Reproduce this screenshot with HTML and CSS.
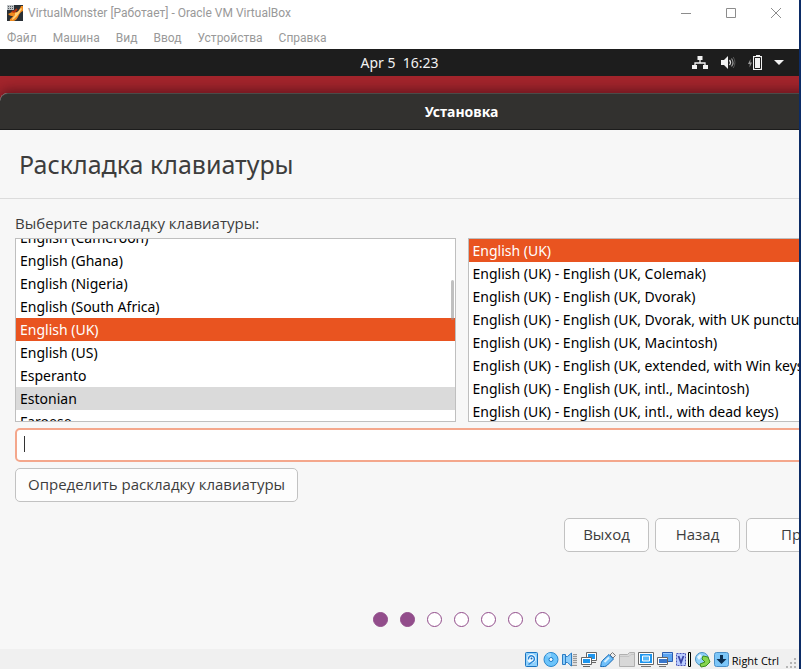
FILE: index.html
```html
<!DOCTYPE html>
<html lang="ru">
<head>
<meta charset="utf-8">
<title>VirtualMonster [Работает] - Oracle VM VirtualBox</title>
<link rel="stylesheet" href="styles.css">
</head>
<body>
<div class="vm">
  <header class="titlebar">
    <svg class="app-icon" viewBox="0 0 16 16" aria-hidden="true">
      <rect width="16" height="16" fill="#2a3036"/>
      <path d="M1 9c3-1 4-3 7-2s5-3 6-6h2v5c-3 1-4 4-5 6s-2 3-4 4H3c-1-2 2-3 3-5-2 0-3 0-5-2z" fill="#f08a1d"/>
      <path d="M8 8c3 0 4-3 6-5l1 1c-2 2-3 5-5 7s-3 3-5 4c0-3 4-4 3-7z" fill="#ffd37a"/>
      <path d="M5 6c2 2 3 0 5-2" stroke="#b5330f" stroke-width="2" fill="none"/>
      <rect width="7" height="5" fill="#bfc3c6"/>
      <path d="M1 1.500h1m1 0h1m1 0h1M1 3.500h1m1 0h1m1 0h1" stroke="#555b60"/>
    </svg>
    <h1 class="caption">VirtualMonster [Работает] - Oracle VM VirtualBox</h1>
    <div class="window-buttons">
      <button type="button" aria-label="Свернуть"><svg viewBox="0 0 12 12"><path d="M1 6.500h10"/></svg></button>
      <button type="button" aria-label="Развернуть"><svg viewBox="0 0 12 12"><path d="M1.500 1.500h9v9h-9z"/></svg></button>
      <button type="button" aria-label="Закрыть"><svg viewBox="0 0 12 12"><path d="M1 1l10 10M11 1L1 11"/></svg></button>
    </div>
  </header>

  <nav class="menubar">
    <button type="button">Файл</button>
    <button type="button">Машина</button>
    <button type="button">Вид</button>
    <button type="button">Ввод</button>
    <button type="button">Устройства</button>
    <button type="button">Справка</button>
  </nav>

  <main class="guest">
    <div class="panel">
      <time class="clock">Apr 5&nbsp; 16:23</time>
      <button type="button" class="tray" aria-label="Системное меню">
        <svg class="tray-icon" viewBox="0 0 16 16"><path d="M5.500 1h5v4h-5zM0 10h5v4H0zM11 10h5v4h-5z" fill="#f2f2f2"/><path d="M8 5v3M3 10V8h10v2" fill="none" stroke="#f2f2f2" stroke-width="1.300"/></svg>
        <svg class="tray-icon" viewBox="0 0 16 16"><path d="M1 5h3l4-4v13l-4-4H1z" fill="#f2f2f2"/><path d="M9.500 5q2 2.500 0 5" fill="none" stroke="#ddd" stroke-width="1.300"/><path d="M11.500 3.500q3 4 0 8" fill="none" stroke="#999" stroke-width="1.200"/><path d="M13.200 2q3.500 5.500 0 11" fill="none" stroke="#555"/></svg>
        <svg class="tray-icon" viewBox="0 0 16 16"><path d="M2.500 4L0 9h1.800L1.500 12.500 4 7.500H2.200z" fill="#999"/><path d="M8 0h4v1h2v14H5V1h3z" fill="#f2f2f2"/><path d="M6.500 2.500h6v11h-6z" fill="none" stroke="#1d1d1d"/></svg>
        <svg class="tray-arrow" viewBox="0 0 10 6"><path d="M0 0h10L5 5z" fill="#f2f2f2"/></svg>
      </button>
    </div>

    <section class="installer">
      <header class="installer-bar"><h2>Установка</h2></header>
      <h3 class="page-title">Раскладка клавиатуры</h3>
      <form class="layout-form">
        <label class="prompt" for="try">Выберите раскладку клавиатуры:</label>
        <div class="lists">
          <ul class="list scrolled" role="listbox" aria-label="Язык" tabindex="0">
            <li role="option">English (Cameroon)</li>
            <li role="option">English (Ghana)</li>
            <li role="option">English (Nigeria)</li>
            <li role="option">English (South Africa)</li>
            <li role="option" class="selected" aria-selected="true">English (UK)</li>
            <li role="option">English (US)</li>
            <li role="option">Esperanto</li>
            <li role="option" class="hovered">Estonian</li>
            <li role="option">Faroese</li>
          </ul>
          <ul class="list" role="listbox" aria-label="Вариант" tabindex="0">
            <li role="option" class="selected" aria-selected="true">English (UK)</li>
            <li role="option">English (UK) - English (UK, Colemak)</li>
            <li role="option">English (UK) - English (UK, Dvorak)</li>
            <li role="option">English (UK) - English (UK, Dvorak, with UK punctuation)</li>
            <li role="option">English (UK) - English (UK, Macintosh)</li>
            <li role="option">English (UK) - English (UK, extended, with Win keys)</li>
            <li role="option">English (UK) - English (UK, intl., Macintosh)</li>
            <li role="option">English (UK) - English (UK, intl., with dead keys)</li>
          </ul>
        </div>
        <input class="try" id="try" type="text">
        <button type="button" class="btn detect">Определить раскладку клавиатуры</button>
        <div class="actions">
          <button type="button" class="btn">Выход</button>
          <button type="button" class="btn">Назад</button>
          <button type="button" class="btn wide">Продолжить</button>
        </div>
      </form>
      <ol class="steps">
        <li class="done"></li><li class="done"></li><li></li><li></li><li></li><li></li><li></li>
      </ol>
    </section>
  </main>

  <footer class="statusbar">
    <svg viewBox="0 0 16 16"><rect x="1.500" y=".5" width="12" height="14" rx="1" fill="#8fd0fb" stroke="#1b74c0"/><circle cx="7.500" cy="6.500" r="4.500" fill="#f2faff"/><path d="M4.500 7.500a3 3 0 1 1 5 1.500L4.500 12.500" fill="none" stroke="#2684d6" stroke-width="1.500"/><circle cx="7.500" cy="6.500" r="1" fill="#1769b5"/></svg>
    <svg viewBox="0 0 16 16"><circle cx="8" cy="7.500" r="7" fill="#6cc4fb" stroke="#2a86cc"/><path d="M8 7.500L3 3a7 7 0 0 1 5-2z" fill="#93d4fd"/><circle cx="8" cy="7.500" r="2" fill="#fff" stroke="#1878c4"/></svg>
    <svg viewBox="0 0 16 16"><path d="M9 3h6v11H9z" fill="#ddd"/><path d="M11 2.500h4M11 4.500h4M11 6.500h4M11 8.500h4M11 10.500h4M8 13.500h7" stroke="#999"/><path d="M.5 2.500h3v10h-3zM3.500 4.500h2l4-3.500v13L5.500 10.500h-2z" fill="#8ccdfb" stroke="#2a7cc4"/></svg>
    <svg viewBox="0 0 16 16"><path d="M5.500.5h10v8h-10z" fill="#fff" stroke="#666"/><path d="M7 2h7v5H7z" fill="#1e96ee"/><path d="M.5 5.500h10v7H.5z" fill="#fff" stroke="#666"/><path d="M2 7h7v4H2z" fill="#1e96ee"/><path d="M2 14.500h7M11 10.500h4" stroke="#666"/></svg>
    <svg viewBox="0 0 16 16"><path d="M10 3l2.500-2.500 3 3L13 6z" fill="#eee" stroke="#777"/><path d="M9 2.500l4.500 4.500-6 6C5.500 15 4 14.500.5 14.500 1.500 12.500.5 11 2.500 8.500z" fill="#70c0fa" stroke="#1769b5"/><path d="M4.500 10L9 5.500" stroke="#d8f0ff" stroke-width="2"/></svg>
    <svg viewBox="0 0 16 16"><path d="M.5 14.500v-12h8l2-2h5v14z" fill="#d8d8d8" stroke="#b0b0b0"/><path d="M1 4.500h9l2-2h3" fill="none" stroke="#c4c4c4"/></svg>
    <svg viewBox="0 0 16 16"><path d="M.5.5h15v12H.5z" fill="#fff" stroke="#666"/><path d="M2 2h12v9H2z" fill="#1e96ee"/><path d="M4.500 4h7v5h-7z" fill="#58b8f8" stroke="#fff"/><path d="M3 14.500h10" stroke="#777"/></svg>
    <svg viewBox="0 0 16 16"><path d="M5.500.5h10v9h-10z" fill="#5ba4f0" stroke="#2a5db0"/><path d="M6 1.500h9" stroke="#9acbff"/><path d="M.5 5.500h10v7H.5z" fill="#fff" stroke="#666"/><path d="M2 7h8v4H2z" fill="#3a78cc"/><path d="M2 14.500h7" stroke="#777"/></svg>
    <svg viewBox="0 0 16 16"><path d="M.5 1.500h9v12h-9z" fill="#b9ccff" stroke="#4a55b8" stroke-dasharray="2 1"/><path d="M2.500 4L5 10.500 7.500 4" fill="none" stroke="#3a44a4" stroke-width="1.800"/><path d="M12.500.5h2v14h-2z" fill="#e4ffd8" stroke="#000"/></svg>
    <svg viewBox="0 0 16 16"><circle cx="7" cy="7" r="6.500" fill="#8fd0f8" stroke="#4a90c4"/><path d="M2 5l3-3 2 2-3 4z" fill="#e5f5ff"/><path d="M8 4l5 1 2 5-4 4-5 1-1-3 5-2-3-3z" fill="#86d64f" stroke="#3c8c1e"/></svg>
    <svg viewBox="0 0 16 16"><rect x=".5" y=".5" width="14" height="14" rx="2" fill="#7cc6f8" stroke="#4b8fc7"/><path d="M6 3h3v4h3.500l-5 5-5-5H6z" fill="#0b2f52"/></svg>
    <span class="host-key">Right Ctrl</span>
    <svg class="grip" viewBox="0 0 10 10"><path d="M8 1h2M8 5h2M4 5h2M8 9h2M4 9h2M0 9h2" stroke="#b5b5b5" stroke-width="2"/></svg>
  </footer>
</div>
</body>
</html>
```
FILE: styles.css
```css
* { box-sizing: border-box; }

body {
  margin: 0;
  background: #fff;
  font-family: "Noto Sans", sans-serif;
}

h1, h2, h3, ul, ol { margin: 0; padding: 0; font-weight: 400; }
ul, ol { list-style: none; }
button { font: inherit; color: inherit; }

.vm {
  display: flex;
  flex-direction: column;
  min-height: 100vh;
  border-right: 2px solid #0c2c66;
  overflow: hidden;
}

/* Host window */
.titlebar {
  display: flex;
  align-items: center;
  height: 25px;
  padding: 0 1px 0 7px;
  color: #999;
}
.app-icon { width: 16px; height: 16px; }
.caption { flex: 1; margin-left: 5px; font: 12px Roboto, sans-serif; }
.window-buttons { display: flex; }
.window-buttons button {
  width: 45px;
  height: 24px;
  padding: 0;
  border: 0;
  background: none;
}
.window-buttons svg { display: block; width: 12px; height: 12px; margin: auto; fill: none; stroke: #8c8c8c; }

.menubar {
  display: flex;
  gap: 16px;
  height: 24px;
  padding: 3px 7px 0;
  font: 12px Roboto, sans-serif;
  color: #999;
}
.menubar button { padding: 0; border: 0; background: none; line-height: 21px; }

/* Guest desktop */
.guest {
  flex: 1;
  display: flex;
  flex-direction: column;
  background: #a3252c;
}
.panel {
  display: grid;
  grid-template-columns: 1fr auto 1fr;
  align-items: center;
  height: 27px;
  background: #1d1d1d;
  color: #f2f2f2;
  font-size: 14px;
}
.clock { grid-column: 2; }
.tray {
  display: flex;
  align-items: center;
  justify-self: end;
  gap: 12px;
  padding: 0 15px 0 0;
  border: 0;
  background: none;
}
.tray-icon { width: 16px; height: 16px; }
.tray-arrow { width: 10px; height: 6px; margin-left: -2px; }

/* The installer is wider than the visible desktop */
.installer {
  flex: 1;
  width: calc(100% + 124px);
  margin-top: 17px;
  border-radius: 8px 0 0;
  background: #f7f7f7;
  color: #3d3d3d;
  box-shadow: 0 -3px 12px rgba(60, 10, 20, 0.6);
}
.installer-bar {
  height: 37px;
  border-top: 1px solid #4b4a48;
  border-bottom: 1px solid #1c1c1c;
  border-radius: 8px 0 0;
  background: #32312f;
  color: #fff;
  text-align: center;
}
.installer-bar h2 { font-size: 14px; font-weight: 700; line-height: 36px; }
.page-title {
  height: 69px;
  padding-left: 19px;
  border-bottom: 1px solid #dcdcdc;
  font-size: 25px;
  line-height: 69px;
}
.layout-form { padding: 12px 15px 0; font-size: 14px; }
.prompt { display: block; padding-bottom: 3px; font: 15px/24px "Open Sans", sans-serif; }
.lists {
  display: grid;
  grid-template-columns: 1fr 1fr;
  gap: 12px;
}
.list {
  position: relative;
  height: 184px;
  border: 1px solid #bfbfbf;
  background: #fff;
  color: #000;
  overflow: hidden;
}
.list li { height: 23px; padding-left: 4px; line-height: 23px; white-space: nowrap; }
.scrolled li:first-child { margin-top: -13px; }
.list .selected { background: #e95420; color: #fff; }
.list .hovered { background: #dadada; }
.scrolled::after {
  content: "";
  position: absolute;
  top: 41px;
  right: 1px;
  width: 3px;
  height: 40px;
  border-radius: 2px;
  background: rgba(150, 150, 150, 0.6);
}
.try {
  display: block;
  width: 100%;
  height: 34px;
  margin: 6px 0;
  padding: 0 8px;
  border: 2px solid #f4a78c;
  border-radius: 5px;
  background: linear-gradient(#333, #333) 7px 6px / 1px 16px no-repeat #fff;
  font: inherit;
  outline: none;
}
.btn {
  height: 34px;
  min-width: 85px;
  padding: 0 12px 2px;
  border: 1px solid #c2c2c2;
  border-radius: 5px;
  background: #fdfdfd;
  font: 15px "Open Sans", sans-serif;
}
.wide { min-width: 162px; }
.actions { display: flex; justify-content: flex-end; gap: 6px; margin-top: 16px; }
.steps {
  display: flex;
  justify-content: center;
  gap: 12px;
  padding: 60px 0 20px;
}
.steps li {
  width: 15px;
  height: 15px;
  border: 1px solid #924d8b;
  border-radius: 50%;
  background: #fff;
}
.steps .done { background: #924d8b; }

/* Host status bar */
.statusbar {
  display: flex;
  align-items: center;
  justify-content: flex-end;
  gap: 3px;
  height: 20px;
  padding: 2px 3px 0 0;
  background: #f0f0f0;
}
.statusbar svg { width: 16px; height: 16px; }
.host-key { margin-left: -1px; font: 11px "Open Sans", sans-serif; color: #000; }
.statusbar .grip { width: 10px; height: 10px; margin: 5px 0 0 4px; }
```
